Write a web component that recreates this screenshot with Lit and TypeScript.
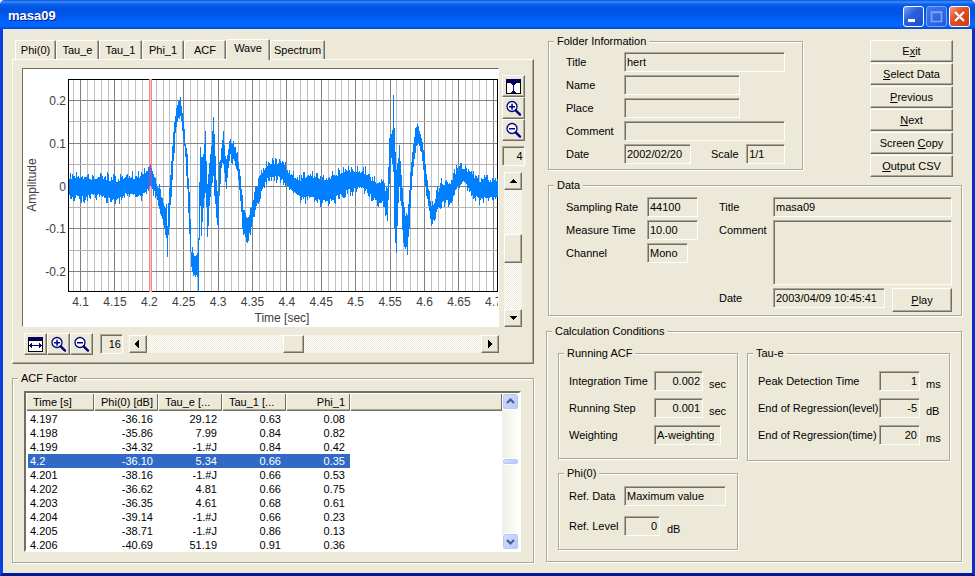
import { LitElement, html, svg, css, nothing } from "lit";
import { customElement } from "lit/decorators.js";
import { styleMap } from "lit/directives/style-map.js";

/* Envelope of the recorded signal: [x, highest y, lowest y] in chart units. */
const ENVELOPE: [number, number, number][] = [
  [68, 179, 194], [80, 178, 196], [90, 180, 194], [100, 178, 194], [115, 183, 200], [125, 178, 193],
  [138, 179, 195], [144, 174, 192], [150, 168, 186], [153, 174, 188], [156, 184, 196], [160, 194, 208],
  [163, 204, 222], [166, 210, 232], [167, 226, 252], [168, 205, 235], [170, 180, 205], [172, 146, 176],
  [175, 118, 132], [177, 108, 122], [179, 100, 112], [181, 106, 120], [183, 122, 136], [185, 144, 156],
  [187, 158, 186], [189, 200, 232], [191, 252, 264], [193, 257, 274], [195, 256, 276], [197, 256, 274],
  [198, 240, 292], [199, 182, 240], [200, 150, 205], [201, 165, 232], [203, 155, 205], [205, 134, 190],
  [206, 166, 202], [207, 184, 236], [209, 164, 206], [211, 146, 180], [213, 117, 176], [214, 134, 192],
  [216, 188, 214], [218, 202, 226], [219, 168, 190], [221, 155, 168], [223, 137, 156], [224, 152, 166],
  [226, 162, 182], [228, 150, 165], [230, 142, 153], [234, 148, 160], [237, 156, 170], [239, 170, 188],
  [241, 190, 212], [243, 212, 230], [246, 222, 240], [249, 215, 232], [253, 200, 216], [257, 187, 202],
  [262, 174, 188], [267, 166, 178], [272, 164, 176], [278, 164, 176], [284, 168, 180], [290, 177, 189],
  [300, 181, 196], [309, 176, 196], [320, 181, 199], [327, 180, 200], [335, 177, 196], [346, 171, 190],
  [356, 173, 187], [365, 174, 187], [372, 182, 197], [382, 186, 201], [385, 192, 210], [387, 190, 217],
  [389, 145, 178], [391, 138, 152], [392, 130, 160], [393, 99, 172], [394, 135, 225], [396, 176, 250],
  [398, 160, 200], [399, 150, 184], [401, 176, 205], [403, 202, 242], [405, 218, 242], [407, 219, 248],
  [409, 190, 225], [411, 165, 190], [413, 145, 162], [415, 131, 148], [418, 129, 142], [421, 138, 150],
  [424, 158, 176], [427, 182, 198], [430, 205, 218], [432, 208, 223], [435, 200, 214], [440, 186, 202],
  [450, 184, 199], [456, 172, 186], [463, 169, 181], [470, 175, 187], [478, 182, 198], [488, 182, 197],
  [498, 181, 197],
];

function waveform(): string {
  let seed = 17;
  const noise = () => {
    seed = (seed * 16807) % 2147483647;
    return Math.pow(seed / 2147483647, 2) * 8;
  };
  let path = "";
  let k = 0;
  let lastTop = 180;
  let lastBottom = 194;
  for (let x = 69; x < 498; x++) {
    while (ENVELOPE[k + 1][0] < x) k++;
    const [x0, t0, b0] = ENVELOPE[k];
    const [x1, t1, b1] = ENVELOPE[k + 1];
    const f = (x - x0) / (x1 - x0);
    let top = Math.round(t0 + (t1 - t0) * f - noise());
    let bottom = Math.round(b0 + (b1 - b0) * f + noise());
    top = Math.min(top, lastBottom);
    bottom = Math.min(292, Math.max(bottom, lastTop));
    path += `M${x}.5 ${top}V${bottom}`;
    lastTop = top;
    lastBottom = bottom;
  }
  return path;
}

const WAVE = waveform();
const X_LABELS = ["4.1", "4.15", "4.2", "4.25", "4.3", "4.35", "4.4", "4.45", "4.5", "4.55", "4.6", "4.65", "4.7"];
const Y_LABELS = ["0.2", "0.1", "0", "-0.1", "-0.2"];
const X_STEP = 34.4;
const Y_STEP = 42.8;

const TABS = ["Phi(0)", "Tau_e", "Tau_1", "Phi_1", "ACF", "Wave", "Spectrum"];
const COLUMNS = ["Time [s]", "Phi(0) [dB]", "Tau_e [...", "Tau_1 [...", "Phi_1"];
const ROWS = [
  ["4.197", "-36.16", "29.12", "0.63", "0.08"],
  ["4.198", "-35.86", "7.99", "0.84", "0.82"],
  ["4.199", "-34.32", "-1.#J", "0.84", "0.42"],
  ["4.2", "-36.10", "5.34", "0.66", "0.35"],
  ["4.201", "-38.16", "-1.#J", "0.66", "0.53"],
  ["4.202", "-36.62", "4.81", "0.66", "0.75"],
  ["4.203", "-36.35", "4.61", "0.68", "0.61"],
  ["4.204", "-39.14", "-1.#J", "0.66", "0.23"],
  ["4.205", "-38.71", "-1.#J", "0.86", "0.13"],
  ["4.206", "-40.69", "51.19", "0.91", "0.36"],
];
const ACTIONS: [string, string, string][] = [
  ["E", "x", "it"],
  ["", "S", "elect Data"],
  ["", "P", "revious"],
  ["", "N", "ext"],
  ["Screen ", "C", "opy"],
  ["", "O", "utput CSV"],
];

const fitIcon = (vertical: boolean) => html`
  <svg class="icon" viewBox="0 0 17 17" shape-rendering="crispEdges" aria-hidden="true">
    <path d="M1 1h15v15H1z" fill="#000" /><path d="M2 5h13v10H2z" fill="#fff" /><path d="M1 1h15v3H1z" fill="#000060" />
    ${vertical
      ? svg`<path d="M8 5h1v10H8zM7 6h3v1H7zM7 13h3v1H7zM6 5h5v1H6zM6 14h5v1H6z" fill="#000080" />`
      : svg`<path d="M2 9h13v1H2zM3 8h1v3H3zM4 7h1v5H4zM13 8h1v3h-1zM12 7h1v5h-1z" fill="#000080" />`}
  </svg>`;

const zoomIcon = (plus: boolean) => html`
  <svg class="icon" viewBox="0 0 17 17" aria-hidden="true">
    <circle cx="7" cy="6.5" r="5" fill="#fff" stroke="#000080" stroke-width="1.3" />
    <path d="M10.7 10.3L15 14.6" stroke="#000080" stroke-width="2.4" stroke-linecap="round" />
    <path d="M4 6h6v1.5H4z" fill="#000080" />
    ${plus ? svg`<path d="M6.3 3.7h1.5v6H6.3z" fill="#000080" />` : nothing}
  </svg>`;

const ARROWS: Record<string, string> = {
  up: "M4 0h1v1h1v1h1v1h1v1H1V3h1V2h1V1h1z",
  down: "M1 0h7v1H7v1H6v1H5v1H4V3H3V2H2V1H1z",
  left: "M4 0h1v8H4V7H3V6H2V5H1V3h1V2h1V1h1z",
  right: "M2 0h1v1h1v1h1v1h1v2H5v1H4v1H3v1H2z",
};
const arrow = (dir: string) => html`
  <svg class="arrow" viewBox="0 0 8 8" shape-rendering="crispEdges" aria-hidden="true">
    <path d=${ARROWS[dir]} transform=${dir === "up" || dir === "down" ? "translate(0 2)" : ""} />
  </svg>`;

@customElement("app-root")
export class AppRoot extends LitElement {
  static styles = css`
    :host {
      display: block;
      font: 11px/14px "Liberation Sans", Arial, sans-serif;
      color: #000;
      --face: #ece9d8;
      --shade: #aca899;
      --dark: #716f64;
    }
    * { box-sizing: border-box; }
    button, input, textarea { font: inherit; color: inherit; margin: 0; border-radius: 0; }
    .window {
      min-height: 100vh;
      display: flex;
      flex-direction: column;
      background: var(--face);
      border: solid #0831d9;
      border-width: 0 3px 3px;
      border-color: #0a3fe0 #0a2ec8 #001a9c #0a3fe0;
      border-radius: 5px 5px 0 0;
    }
    .titlebar {
      display: flex;
      align-items: center;
      height: 29px;
      margin: 0 -3px;
      padding: 3px 5px 0 8px;
      border-radius: 5px 5px 0 0;
      background: linear-gradient(#0a50d8 0, #3a90ff 2px, #0a62ee 4px, #0054e3 8px, #0055e8 14px, #0066ff 22px, #0066ff 26px, #0048d0 29px);
    }
    .title {
      flex: 1;
      margin: 0;
      font-size: 13px;
      line-height: 16px;
      font-weight: bold;
      color: #fff;
      text-shadow: 1px 1px #0a1883;
    }
    .caption { display: flex; gap: 2px; }
    .cap {
      width: 21px;
      height: 21px;
      padding: 0;
      border: 1px solid #fff;
      border-radius: 3px;
      background: linear-gradient(135deg, #7aa0f0, #2a5fe0 40%, #1c4fd0);
    }
    .cap.off { border-color: #7fa4f0; background: linear-gradient(135deg, #3f78ec, #1f5be0); }
    .cap.close { background: linear-gradient(135deg, #f09a80, #e0502c 40%, #c83c14); }
    .cap svg { display: block; width: 19px; height: 19px; }

    .body {
      flex: 1;
      display: grid;
      grid-template-columns: 522fr 416fr;
      align-items: start;
      gap: 12px;
      padding: 5px 10px 10px 9px;
    }
    .left { display: flex; flex-direction: column; gap: 7px; padding-top: 3px; min-width: 0; }
    .right { display: flex; flex-direction: column; gap: 8px; min-width: 0; }

    fieldset {
      margin: 0;
      min-width: 0;
      --inset: 11px;
      padding-left: var(--inset);
      border: 1px solid var(--shade);
      box-shadow: 1px 1px #fff, inset 1px 1px #fff;
    }
    legend { margin-left: calc(5px - var(--inset)); padding: 0 3px; background: var(--face); }

    .tabs { display: flex; align-items: flex-end; height: 22px; padding-left: 3px; }
    .tab {
      height: 19px;
      padding: 0 4px;
      border: 0;
      background: var(--face);
      border-radius: 2px 2px 0 0;
      box-shadow: inset 1px 1px #fff, inset -1px 0 var(--dark), inset -2px 0 var(--shade);
    }
    .tab.active { height: 21px; padding-bottom: 4px; position: relative; margin-bottom: -1px; }
    .panel {
      display: grid;
      grid-template-columns: 1fr 24px;
      column-gap: 2px;
      row-gap: 6px;
      padding: 8px;
      padding-left: 9px;
      border: 1px solid;
      border-color: #fff var(--dark) var(--dark) #fff;
      box-shadow: inset -1px -1px var(--shade);
    }
    .chart {
      border: 1px solid;
      border-color: var(--dark) #fff #fff var(--dark);
      background: #fff;
    }
    .chart svg { display: block; width: 100%; height: auto; }
    .axis { font-size: 12px; fill: #404040; }
    .vtools { display: flex; flex-direction: column; align-items: center; padding-top: 7px; }
    .htools { display: flex; align-items: center; padding-left: 2px; }
    .raised {
      padding: 0;
      border: 1px solid;
      border-color: #fff var(--dark) var(--dark) #fff;
      background: var(--face);
      box-shadow: inset -1px -1px var(--shade);
      display: flex;
      align-items: center;
      justify-content: center;
    }
    .tool { width: 23px; height: 22px; flex: none; }
    .icon { display: block; width: 17px; height: 17px; }
    .arrow { display: block; width: 8px; height: 8px; }
    .sunken {
      height: 20px;
      width: 100%;
      min-width: 0;
      padding: 0 2px;
      border: 1px solid;
      border-color: var(--shade) #fff #fff var(--shade);
      box-shadow: inset 1px 1px var(--dark);
      background: var(--face);
      outline: 0;
      resize: none;
      display: block;
    }
    .num { text-align: right; }
    .readout { width: 23px; flex: none; padding: 0 1px; }
    .vtools .readout { margin: 5px 0 6px; }
    .htools .readout { margin: 0 6px 0 7px; }
    .track {
      background: repeating-conic-gradient(#fff 0 25%, #ece9d8 0 50%) 0 0 / 2px 2px;
    }
    .vbar { flex: 1; width: 18px; display: grid; grid-template-rows: 18px 45fr 29px 47fr 18px; }
    .hbar { flex: 1; height: 18px; display: grid; grid-template-columns: 18px 136fr 21px 177fr 18px; }

    .acf { padding: 6px 12px 10px var(--inset); }
    .list {
      height: 161px;
      display: flex;
      border: 2px solid;
      border-color: var(--dark) #fff #fff var(--dark);
      background: #fff;
      overflow: hidden;
    }
    .tablebox { flex: 1; min-width: 0; }
    table { width: 100%; table-layout: fixed; border-spacing: 0; }
    th {
      height: 18px;
      padding: 0 5px 0 7px;
      font-weight: normal;
      text-align: left;
      background: var(--face);
      box-shadow: inset 1px 1px #fff, inset -1px -1px var(--dark), inset 0 -2px var(--shade);
      white-space: nowrap;
    }
    th.num, td.num { text-align: right; }
    .first { width: 68px; }
    .mid { width: 64px; }
    td { height: 14px; padding: 0 5px 0 2px; line-height: 14px; }
    td:first-child { border-left: 2px solid transparent; background-clip: padding-box; }
    .spacer td { height: 1px; padding: 0; line-height: 1px; }
    .selected td:not(:last-child) { background-color: #316ac5; color: #fff; }
    .xpbar {
      width: 17px;
      display: grid;
      grid-template-rows: 17px 48fr 7px 68fr 17px;
      background: linear-gradient(90deg, #f0efe8, #fefefb);
    }
    .xp {
      padding: 0;
      border: 1px solid #fff;
      border-radius: 3px;
      background: linear-gradient(135deg, #d2defe, #b4c8f8);
      box-shadow: inset 0 0 0 1px #b8c8f0;
    }
    .xp svg { display: block; width: 15px; height: 15px; }

    .top { display: flex; justify-content: space-between; align-items: flex-start; padding: 0 9px 0 2px; }
    .folder { --inset: 17px; width: 63%; padding: 4px 17px 5px var(--inset); }
    .rows { display: grid; gap: 3px 0; align-items: center; }
    .folder .rows { grid-template-columns: 58px 1fr; }
    .short { width: 72%; }
    .pair { display: grid; grid-template-columns: 67px 1fr 39px; align-items: center; }
    .pair label { padding-left: 20px; }
    .actions { display: flex; flex-direction: column; gap: 1px; padding-top: 6px; margin-bottom: -8px; }
    .push { width: 83px; height: 22px; }
    .data {
      --inset: 17px;
      display: grid;
      grid-template-columns: 132px 1fr;
      gap: 21px;
      align-items: start;
      margin-left: 2px;
      padding: 5px 9px 3px var(--inset);
    }
    .data .a { grid-template-columns: 81px 1fr; }
    .data .b { grid-template-columns: 54px 1fr; align-items: start; }
    .data .b label { line-height: 20px; }
    .channel { width: 41px; }
    .memo { height: 65px; }
    .dateline { display: grid; grid-template-columns: 112px 60px; justify-content: space-between; }
    .play { width: 60px; height: 24px; }
    .calc {
      display: grid;
      grid-template-columns: 180fr 203fr;
      align-items: start;
      gap: 9px;
      padding: 8px 11px 11px var(--inset);
    }
    .stack { display: flex; flex-direction: column; gap: 7px; min-width: 0; }
    .cond { --inset: 10px; padding: 11px 10px 13px var(--inset); }
    .cond .rows { row-gap: 7px; column-gap: 6px; }
    .running .rows { grid-template-columns: 79px 49px 1fr; }
    .wide { grid-column: 2 / 4; width: 67px; }
    .tau { padding-bottom: 15px; }
    .tau .rows { grid-template-columns: 115px 41px 1fr; }
    .phi { padding-top: 6px; }
    .phi .rows { grid-template-columns: 55px 36px 1fr; row-gap: 10px; column-gap: 0; }
    .phi .wide { width: 102px; }
    .phi .unit { padding-left: 7px; }
    .unit { align-self: end; }
    .cond label { white-space: nowrap; }
  `;

  private field(id: string, label: string, value = "", cls = "", unit = "") {
    return html`<label for=${id}>${label}</label>
      <input id=${id} class="sunken ${cls}" readonly .value=${value} />
      ${unit ? html`<span class="unit">${unit}</span>` : nothing}`;
  }

  private chart() {
    return html`<svg viewBox="23 69 475 257" role="img" aria-label="Amplitude over time">
      <rect x="23" y="69" width="475" height="257" fill="#fff" />
      <g shape-rendering="crispEdges" fill="none">
        ${Array.from({ length: 62 }, (_, i) => {
          const x = Math.floor(80.5 + (i - 1) * (X_STEP / 5)) + 0.5;
          return svg`<path d="M${x} 80V291" stroke=${(i - 1) % 5 ? "#c0c0c0" : "#808080"} />`;
        })}
        ${Array.from({ length: 9 }, (_, i) => {
          const y = Math.floor(100.5 + i * (Y_STEP / 2)) + 0.5;
          return svg`<path d="M69 ${y}H497" stroke=${i % 2 ? "#b4b4b4" : "#808080"} />`;
        })}
        <path d="M68.5 79.5H497.5V291.5H68.5z" stroke="#000" />
        <path d=${WAVE} stroke="#0080ff" />
        <path d="M149.5 79V292M151.5 79V292" stroke="#f08888" />
        <path d="M150.5 79V292" stroke="#f8c8c8" />
        <path d="M149.5 166V188M150.5 164V186M151.5 168V187" stroke="#7060c8" />
      </g>
      <g class="axis">
        ${X_LABELS.map((t, i) => svg`<text x=${80.5 + i * X_STEP} y="306" text-anchor="middle">${t}</text>`)}
        ${Y_LABELS.map((t, i) => svg`<text x="66" y=${105 + i * Y_STEP} text-anchor="end">${t}</text>`)}
        <text x="282" y="322" text-anchor="middle">Time [sec]</text>
        <text transform="translate(36 185) rotate(-90)" text-anchor="middle">Amplitude</text>
      </g>
    </svg>`;
  }

  private list() {
    return html`<div class="list">
      <div class="tablebox">
        <table>
          <thead>
            <tr>
              ${COLUMNS.map((c, i) => html`<th scope="col" class="${i ? "mid" : "first"} ${i === 1 || i === 4 ? "num" : ""}">${c}</th>`)}
              <th></th>
            </tr>
          </thead>
          <tbody>
            <tr class="spacer"><td colspan="6"></td></tr>
            ${ROWS.map(
              (r) => html`<tr class=${r[0] === "4.2" ? "selected" : ""}>
                ${r.map((v, i) => html`<td class=${i ? "num" : ""}>${v}</td>`)}
                <td></td>
              </tr>`
            )}
          </tbody>
        </table>
      </div>
      <div class="xpbar">
        <button class="xp" aria-label="Scroll up">
          <svg viewBox="0 0 15 15"><path d="M4 9l3.5-3.5L11 9" fill="none" stroke="#4d6185" stroke-width="2.2" /></svg>
        </button>
        <span></span><div class="xp"></div><span></span>
        <button class="xp" aria-label="Scroll down">
          <svg viewBox="0 0 15 15"><path d="M4 6l3.5 3.5L11 6" fill="none" stroke="#4d6185" stroke-width="2.2" /></svg>
        </button>
      </div>
    </div>`;
  }

  render() {
    return html`<div class="window">
      <header class="titlebar">
        <h1 class="title">masa09</h1>
        <div class="caption">
          <button class="cap" aria-label="Minimize"><svg viewBox="0 0 19 19"><path d="M4 12h7v3H4z" fill="#fff" /></svg></button>
          <button class="cap off" aria-label="Maximize" disabled>
            <svg viewBox="0 0 19 19"><path d="M4.5 5h10v9.5h-10zM4 5.5h11" fill="none" stroke="#7fa4f0" stroke-width="1.6" /></svg>
          </button>
          <button class="cap close" aria-label="Close">
            <svg viewBox="0 0 19 19"><path d="M5 5l9 9M14 5l-9 9" stroke="#fff" stroke-width="2.2" /></svg>
          </button>
        </div>
      </header>
      <main class="body">
        <div class="left">
          <div>
            <div class="tabs" role="tablist">
              ${TABS.map(
                (t, i) => html`<button
                  role="tab"
                  class="tab ${t === "Wave" ? "active" : ""}"
                  aria-selected=${t === "Wave"}
                  style=${styleMap({ width: [41, 43, 43, 42, 42, 44, 55][i] + "px" })}
                >${t}</button>`
              )}
            </div>
            <div class="panel">
              <div class="chart">${this.chart()}</div>
              <div class="vtools">
                <button class="raised tool" aria-label="Fit vertically">${fitIcon(true)}</button>
                <button class="raised tool" aria-label="Zoom in vertically">${zoomIcon(true)}</button>
                <button class="raised tool" aria-label="Zoom out vertically">${zoomIcon(false)}</button>
                <input class="sunken num readout" readonly aria-label="Vertical zoom" .value=${"4"} />
                <div class="vbar track">
                  <button class="raised" aria-label="Scroll up">${arrow("up")}</button>
                  <span></span><div class="raised"></div><span></span>
                  <button class="raised" aria-label="Scroll down">${arrow("down")}</button>
                </div>
              </div>
              <div class="htools">
                <button class="raised tool" aria-label="Fit horizontally">${fitIcon(false)}</button>
                <button class="raised tool" aria-label="Zoom in horizontally">${zoomIcon(true)}</button>
                <button class="raised tool" aria-label="Zoom out horizontally">${zoomIcon(false)}</button>
                <input class="sunken num readout" readonly aria-label="Horizontal zoom" .value=${"16"} />
                <div class="hbar track">
                  <button class="raised" aria-label="Scroll left">${arrow("left")}</button>
                  <span></span><div class="raised"></div><span></span>
                  <button class="raised" aria-label="Scroll right">${arrow("right")}</button>
                </div>
              </div>
            </div>
          </div>
          <fieldset class="acf">
            <legend>ACF Factor</legend>
            ${this.list()}
          </fieldset>
        </div>

        <div class="right">
          <div class="top">
            <fieldset class="folder">
              <legend>Folder Information</legend>
              <div class="rows">
                ${this.field("f-title", "Title", "hert")}
                ${this.field("f-name", "Name", "", "short")}
                ${this.field("f-place", "Place", "", "short")}
                ${this.field("f-comment", "Comment")}
                <label for="f-date">Date</label>
                <div class="pair">
                  <input id="f-date" class="sunken" readonly .value=${"2002/02/20"} />
                  <label for="f-scale">Scale</label>
                  <input id="f-scale" class="sunken" readonly .value=${"1/1"} />
                </div>
              </div>
            </fieldset>
            <div class="actions">
              ${ACTIONS.map(([a, k, b]) => html`<button class="raised push"><span>${a}<u>${k}</u>${b}</span></button>`)}
            </div>
          </div>

          <fieldset class="data">
            <legend>Data</legend>
            <div class="rows a">
              ${this.field("d-rate", "Sampling Rate", "44100")}
              ${this.field("d-time", "Measure Time", "10.00")}
              ${this.field("d-channel", "Channel", "Mono", "channel")}
            </div>
            <div class="rows b">
              ${this.field("d-title", "Title", "masa09")}
              <label for="d-comment">Comment</label>
              <textarea id="d-comment" class="sunken memo" readonly></textarea>
              <label for="d-date">Date</label>
              <div class="dateline">
                <input id="d-date" class="sunken" readonly .value=${"2003/04/09 10:45:41"} />
                <button class="raised play"><span><u>P</u>lay</span></button>
              </div>
            </div>
          </fieldset>

          <fieldset class="calc">
            <legend>Calculation Conditions</legend>
            <div class="stack">
              <fieldset class="cond running">
                <legend>Running ACF</legend>
                <div class="rows">
                  ${this.field("c-int", "Integration Time", "0.002", "num", "sec")}
                  ${this.field("c-step", "Running Step", "0.001", "num", "sec")}
                  ${this.field("c-weight", "Weighting", "A-weighting", "wide")}
                </div>
              </fieldset>
              <fieldset class="cond phi">
                <legend>Phi(0)</legend>
                <div class="rows">
                  ${this.field("p-data", "Ref. Data", "Maximum value", "wide")}
                  ${this.field("p-level", "Ref. Level", "0", "num", "dB")}
                </div>
              </fieldset>
            </div>
            <fieldset class="cond tau">
              <legend>Tau-e</legend>
              <div class="rows">
                ${this.field("t-peak", "Peak Detection Time", "1", "num", "ms")}
                ${this.field("t-level", "End of Regression(level)", "-5", "num", "dB")}
                ${this.field("t-time", "End of Regression(time)", "20", "num", "ms")}
              </div>
            </fieldset>
          </fieldset>
        </div>
      </main>
    </div>`;
  }
}
